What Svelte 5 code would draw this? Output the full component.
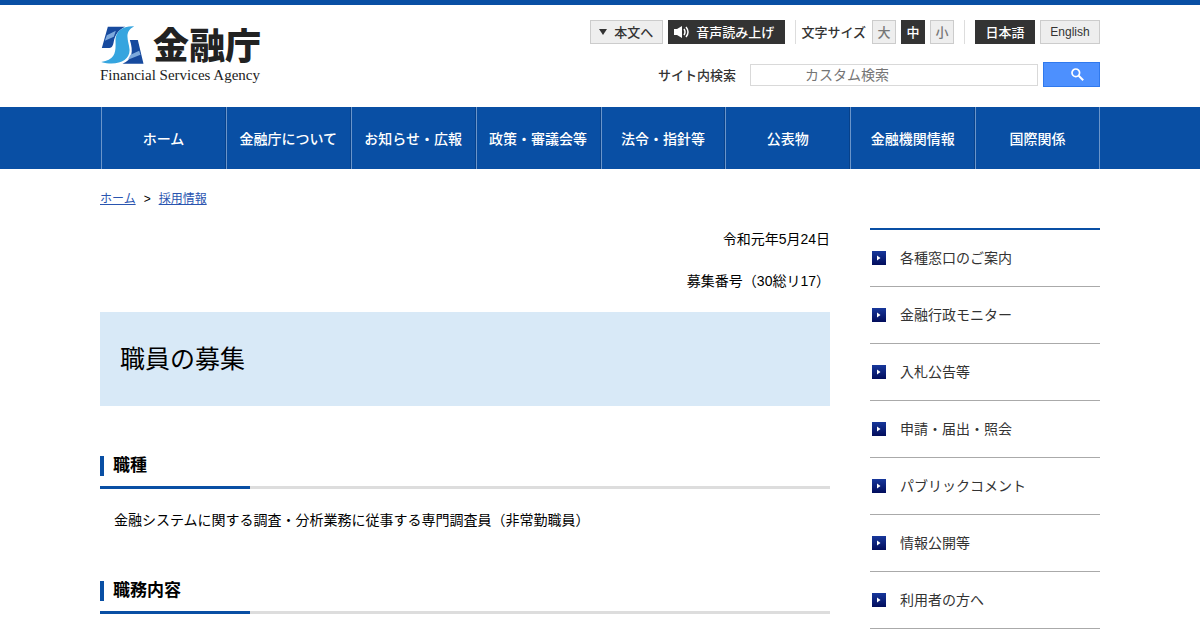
<script lang="ts">
	const navItems = [
		'ホーム',
		'金融庁について',
		'お知らせ・広報',
		'政策・審議会等',
		'法令・指針等',
		'公表物',
		'金融機関情報',
		'国際関係'
	];

	const sideItems = [
		'各種窓口のご案内',
		'金融行政モニター',
		'入札公告等',
		'申請・届出・照会',
		'パブリックコメント',
		'情報公開等',
		'利用者の方へ'
	];

	const sizes = ['大', '中', '小'];

	let size = $state('中');
	let query = $state('');
</script>

<div class="page">
	<header class="header container">
		<a href="/" class="logo">
			<span class="logo-main">
				<svg class="mark" viewBox="0 0 128 114" aria-hidden="true">
					<path d="M20 2H72C52 12 42 26 38 46C36 60 32 65 25 66H2Z" fill="#174a9e" />
					<path d="M17 28L44 14L38 32L11 44Z" fill="#7da9dc" />
					<path d="M99 1C60 0 42 20 43 44C44 78 44 100 0 108C50 122 88 102 85 70C83 44 66 20 99 1Z" fill="#36a5df" />
					<path d="M86 42H110L127 113H64C94 102 97 76 86 42Z" fill="#174a9e" />
					<path d="M88 86L114 74L118 86L80 101Z" fill="#7da9dc" />
				</svg>
				<span class="logo-ja">金融庁</span>
			</span>
			<span class="logo-en">Financial Services Agency</span>
		</a>

		<div class="tools">
			<div class="tool-row">
				<a href="#main" class="btn skip"><span class="triangle"></span>本文へ</a>
				<button type="button" class="btn dark speech">
					<svg viewBox="0 0 16 12" width="16" height="12" aria-hidden="true">
						<path d="M0 3H3L8 0V12L3 9H0Z" fill="#fff" />
						<path d="M10 3Q12 6 10 9M12 1Q16 6 12 11" fill="none" stroke="#fff" stroke-width="1.5" />
					</svg>
					音声読み上げ
				</button>
				<div class="font-size" role="group" aria-labelledby="size-label">
					<span id="size-label" class="label">文字サイズ</span>
					{#each sizes as s}
						<button type="button" class="btn square" class:dark={size === s} onclick={() => (size = s)}>
							{s}
						</button>
					{/each}
				</div>
				<a href="/" class="btn dark lang">日本語</a>
				<a href="/en/" class="btn lang english">English</a>
			</div>
			<form class="search" onsubmit={(e) => e.preventDefault()}>
				<label for="search-box" class="label">サイト内検索</label>
				<input id="search-box" type="text" placeholder="カスタム検索" bind:value={query} />
				<button type="submit" aria-label="検索">
					<svg viewBox="0 0 13 13" width="13" height="13" aria-hidden="true">
						<circle cx="4.8" cy="4.8" r="3.8" fill="none" stroke="#fff" stroke-width="1.7" />
						<path d="M7.7 7.7L12.2 12.2" stroke="#fff" stroke-width="2" />
					</svg>
				</button>
			</form>
		</div>
	</header>

	<nav class="nav">
		<ul class="container">
			{#each navItems as item}
				<li><a href="/">{item}</a></li>
			{/each}
		</ul>
	</nav>

	<div class="container">
		<div class="breadcrumb">
			<a href="/">ホーム</a>
			<span>&gt;</span>
			<a href="/">採用情報</a>
		</div>

		<div class="columns">
			<main id="main">
				<p class="right">令和元年5月24日</p>
				<p class="right">募集番号（30総リ17）</p>
				<h1>職員の募集</h1>

				<section>
					<h2><span>職種</span></h2>
					<p>　金融システムに関する調査・分析業務に従事する専門調査員（非常勤職員）</p>
				</section>
				<section>
					<h2><span>職務内容</span></h2>
				</section>
			</main>

			<aside>
				<ul>
					{#each sideItems as item}
						<li>
							<a href="/">
								<svg viewBox="0 0 14 14" width="14" height="14" aria-hidden="true">
									<defs>
										<linearGradient id="side-blue" x2="0" y2="1">
											<stop stop-color="#17379b" />
											<stop offset="1" stop-color="#020d5c" />
										</linearGradient>
									</defs>
									<rect width="14" height="14" fill="url(#side-blue)" />
									<path d="M5 4.5L8.5 7L5 9.5Z" fill="#fff" />
								</svg>
								{item}
							</a>
						</li>
					{/each}
				</ul>
			</aside>
		</div>
	</div>
</div>

<style>
	:global(body) {
		background: #fff;
	}

	.page {
		border-top: 5px solid #094fa4;
		font-family: 'Liberation Sans', 'Noto Sans CJK JP', sans-serif;
		font-size: 14px;
		line-height: 21px;
		color: #000;
	}

	.page * {
		box-sizing: border-box;
	}

	.container {
		max-width: 1000px;
		margin: 0 auto;
	}

	ul {
		list-style: none;
		margin: 0;
		padding: 0;
	}

	p {
		margin: 0 0 21px;
	}

	.header {
		display: flex;
		justify-content: space-between;
		align-items: flex-start;
		padding: 15px 0 20px;
	}

	.logo {
		display: flex;
		flex-direction: column;
		color: #222;
		text-decoration: none;
	}

	.logo-main {
		display: flex;
		align-items: center;
		gap: 9px;
		height: 47px;
	}

	.mark {
		width: 43px;
		height: 38px;
		margin: 2px 0 0 1px;
	}

	.logo-ja {
		font-family: 'Noto Sans CJK JP', sans-serif;
		font-size: 36px;
		line-height: 47px;
		font-weight: 900;
	}

	.logo-en {
		font-family: 'Liberation Serif', serif;
		font-size: 15px;
		line-height: 16px;
	}

	.tools {
		display: flex;
		flex-direction: column;
		align-items: flex-end;
		gap: 18px;
	}

	.tool-row {
		display: flex;
		gap: 5px;
	}

	.btn {
		display: flex;
		align-items: center;
		justify-content: center;
		height: 24px;
		padding: 0 9px;
		border: 1px solid #ccc;
		background: #eee;
		color: #333;
		font-family: 'Noto Sans CJK JP', sans-serif;
		font-size: 13px;
		font-weight: 500;
		line-height: 20px;
		text-decoration: none;
		white-space: nowrap;
	}

	.btn.dark {
		border-color: #333;
		background: #333;
		color: #fff;
	}

	.skip {
		gap: 7px;
		padding: 0 9px 0 8px;
	}

	.triangle {
		border: 4px solid transparent;
		border-top: 6px solid #333;
		border-bottom: 0;
	}

	.speech {
		gap: 6px;
		padding: 0 10px 0 5px;
	}

	.font-size {
		display: flex;
		gap: 5px;
		margin: 0 5px;
		padding: 0 10px 0 5px;
		border: solid #ddd;
		border-width: 0 1px;
	}

	.label {
		font-family: 'Noto Sans CJK JP', sans-serif;
		font-size: 13px;
		font-weight: 500;
		line-height: 24px;
		color: #333;
	}

	.font-size .label {
		padding-right: 1px;
	}

	.square {
		width: 24px;
		padding: 0;
	}

	.square:not(.dark) {
		color: #777;
	}

	.lang {
		width: 60px;
		padding: 0;
	}

	.english {
		font-family: 'Liberation Sans', sans-serif;
		font-size: 12px;
		font-weight: 400;
	}

	.search {
		display: flex;
		align-items: center;
	}

	.search input {
		width: 288px;
		height: 22px;
		margin: 0 5px 0 14px;
		padding: 0 0 0 54px;
		border: 1px solid #d9d9d9;
		border-radius: 0;
		font-family: 'Liberation Sans', 'Noto Sans CJK JP', sans-serif;
		font-size: 14px;
	}

	.search input::placeholder {
		color: #757575;
	}

	.search button {
		display: flex;
		align-items: center;
		width: 57px;
		height: 25px;
		padding: 0 0 0 27px;
		border: 1px solid #3079ed;
		background: #4d90fe;
	}

	.nav {
		background: #094fa4;
	}

	.nav ul {
		display: grid;
		grid-template-columns: repeat(8, 1fr);
		padding-left: 1px;
	}

	.nav li {
		border-left: 1px solid #6a95ca;
		border-right: 1px solid #07418a;
	}

	.nav li:last-child {
		border-right-color: #6a95ca;
	}

	.nav a {
		display: block;
		padding: 21px 0 20px;
		color: #fff;
		font-family: 'Noto Sans CJK JP', sans-serif;
		font-weight: 500;
		text-align: center;
		text-decoration: none;
		white-space: nowrap;
	}

	.breadcrumb {
		display: flex;
		gap: 8px;
		padding: 21px 0;
		font-size: 12px;
		line-height: 18px;
	}

	.breadcrumb a {
		color: #2a55b0;
	}

	.columns {
		display: flex;
		gap: 40px;
		margin-top: -1px;
	}

	main {
		flex: 1;
		padding-top: 1px;
	}

	.right {
		text-align: right;
	}

	h1 {
		margin: -1px 0 50px;
		padding: 28px 20px;
		background: #d8e9f7;
		font-size: 25px;
		font-weight: 400;
		line-height: 38px;
	}

	h2 {
		position: relative;
		margin: 0 0 21px;
		padding-bottom: 10px;
		border-bottom: 3px solid #ddd;
		font-size: 17px;
		line-height: 20px;
	}

	h2::after {
		content: '';
		position: absolute;
		left: 0;
		bottom: -3px;
		width: 150px;
		height: 3px;
		background: #094fa4;
	}

	h2 span {
		display: block;
		padding-left: 9px;
		border-left: 4px solid #094fa4;
	}

	section p {
		margin-bottom: 50px;
	}

	aside {
		width: 230px;
	}

	aside ul {
		border-top: 2px solid #094fa4;
	}

	aside li {
		border-bottom: 1px solid #aaa;
	}

	aside a {
		display: flex;
		align-items: flex-start;
		gap: 14px;
		padding: 18px 2px 17px;
		color: #333;
		text-decoration: none;
	}

	aside svg {
		margin-top: 3px;
	}
</style>
